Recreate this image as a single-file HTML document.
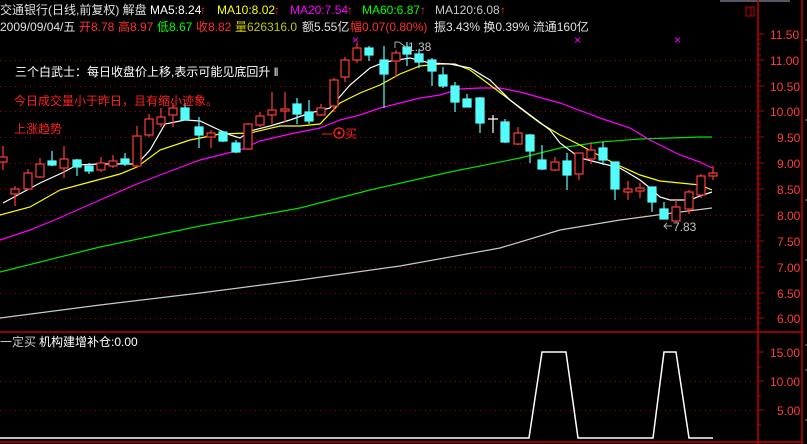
<!DOCTYPE html>
<html><head><meta charset="utf-8"><style>
html,body{margin:0;padding:0;background:#000;}
svg{display:block;}
text{font-family:"Liberation Sans","Noto Sans CJK SC",sans-serif;font-size:12px;}
</style></head><body>
<svg width="807" height="444" viewBox="0 0 807 444" xmlns="http://www.w3.org/2000/svg">
<rect width="807" height="444" fill="#000"/>
<line x1="720" y1="1" x2="790" y2="1" stroke="#556" stroke-width="2"/>
<!-- grid -->
<g stroke="#a00000" stroke-width="1" stroke-dasharray="1,4">
<line x1="0" y1="60.5" x2="757" y2="60.5"/><line x1="0" y1="86.5" x2="757" y2="86.5"/>
<line x1="0" y1="111.5" x2="757" y2="111.5"/><line x1="0" y1="137.5" x2="757" y2="137.5"/>
<line x1="0" y1="163.5" x2="757" y2="163.5"/><line x1="0" y1="189.5" x2="757" y2="189.5"/>
<line x1="0" y1="215.5" x2="757" y2="215.5"/><line x1="0" y1="241.5" x2="757" y2="241.5"/>
<line x1="0" y1="267.5" x2="757" y2="267.5"/><line x1="0" y1="293.5" x2="757" y2="293.5"/>
<line x1="0" y1="318.5" x2="757" y2="318.5"/>
<line x1="0" y1="381.5" x2="757" y2="381.5"/><line x1="0" y1="410.5" x2="757" y2="410.5"/>
</g>
<!-- axes -->
<g stroke="#c00000" stroke-width="1.5" fill="none">
<line x1="758" y1="0" x2="758" y2="444"/>
<line x1="802" y1="0" x2="802" y2="444"/>
<line x1="0" y1="332" x2="802" y2="332"/>
<line x1="0" y1="442" x2="802" y2="442"/>
<rect x="746" y="7" width="8" height="9" stroke-width="1"/>
<line x1="751" y1="7" x2="751" y2="16" stroke-width="1"/>
</g>
<g stroke="#c00000" stroke-width="1">
<path d="M758 34h6M758 60h6M758 86h6M758 111h6M758 137h6M758 163h6M758 189h6M758 215h6M758 241h6M758 267h6M758 293h6M758 318h6M758 352h6M758 381h6M758 410h6"/>
<path d="M758 39h3M758 44h3M758 49h3M758 55h3M758 65h3M758 70h3M758 75h3M758 81h3M758 91h3M758 96h3M758 101h3M758 106h3M758 116h3M758 122h3M758 127h3M758 132h3M758 142h3M758 148h3M758 153h3M758 158h3M758 168h3M758 173h3M758 179h3M758 184h3M758 194h3M758 199h3M758 205h3M758 210h3M758 220h3M758 225h3M758 231h3M758 236h3M758 246h3M758 251h3M758 257h3M758 262h3M758 272h3M758 277h3M758 283h3M758 288h3M758 298h3M758 303h3M758 308h3M758 313h3M758 323h3M758 367h3M758 396h3M758 425h3"/>
</g>
<g fill="#ff3c3c" font-size="13">
<text x="770" y="39">11.50</text><text x="770" y="65">11.00</text><text x="770" y="91">10.50</text>
<text x="770" y="116">10.00</text><text x="777" y="142">9.50</text><text x="777" y="168">9.00</text>
<text x="777" y="194">8.50</text><text x="777" y="220">8.00</text><text x="777" y="246">7.50</text>
<text x="777" y="272">7.00</text><text x="777" y="298">6.50</text><text x="777" y="323">6.00</text>
<text x="770" y="357">15.00</text><text x="770" y="386">10.00</text><text x="777" y="415">5.00</text>
</g>
<!-- MA lines -->
<g fill="none" stroke-width="1.2">
<polyline stroke="#c8c8c8" points="0,318 100,305 200,293 300,280 400,266 500,248 560,230 620,220 680,212 712,208"/>
<polyline stroke="#00e000" points="0,272 100,247 200,226 300,208 370,190 450,172 520,158 560,148 600,142 640,139 700,137 712,137"/>
<polyline stroke="#ff00ff" points="0,240 30,230 57,219 100,200 137,184 160,175 200,160 240,150 260,141 290,134 320,128 340,120 360,115 380,108 400,103 420,98 440,95 460,89 480,88 500,88 520,92 560,103 600,118 630,128 650,140 680,155 700,162 712,168"/>
<polyline stroke="#ffff00" points="0,215 30,207 60,190 90,182 120,174 137,167 160,150 190,140 220,134 250,133 280,126 300,126 320,124 340,103 360,93 380,85 400,74 420,66 440,64 455,64 470,70 490,85 510,100 520,108 540,123 560,135 580,145 600,156 620,166 640,175 660,181 680,183 700,185 712,190"/>
<polyline stroke="#ffffff" points="3,203 40,183 64,172 77,165 100,164 137,164 150,150 165,124 185,120 200,121 215,128 230,135 240,138 250,131 270,126 290,120 310,113 330,108 350,85 370,68 385,62 410,58 430,63 450,64 470,68 490,80 510,100 530,115 550,130 560,143 580,158 600,163 620,168 640,180 650,188 660,197 670,200 690,200 700,196 712,192"/>
</g>
<!-- red candles -->
<g stroke="#ff3c3c" stroke-width="1.2" fill="#000">
<path d="M3 146V170M15 186V206M28 169V190M40 158V178M64 146V178M101 157V172M113 155V168M137 126V168M149 114V137M161 108V127M173 103V127M211 130V148M248 123V150M260 112V127M272 92V124M285 92V122M321 104V116M334 78V112M345 57V82M357 43V63M396 50V77M518 127V145M555 157V171M579 153V180M591 142V164M628 181V200M640 183V198M676 200V222M689 190V214M701 174V198M713 166V180"/>
<rect x="-1" y="157" width="8" height="5"/><rect x="11" y="189" width="8" height="5"/>
<rect x="24" y="173" width="8" height="16"/><rect x="36" y="164" width="8" height="13"/>
<rect x="60" y="159" width="8" height="9"/><rect x="97" y="163" width="8" height="7"/>
<rect x="109" y="161" width="8" height="5"/><rect x="133" y="136" width="8" height="30"/>
<rect x="145" y="119" width="8" height="16"/><rect x="157" y="117" width="8" height="7"/>
<rect x="169" y="108" width="8" height="7"/><rect x="207" y="133" width="8" height="4"/>
<rect x="244" y="124" width="8" height="25"/><rect x="256" y="116" width="8" height="9"/>
<rect x="268" y="110" width="8" height="5"/><rect x="281" y="109" width="8" height="2"/>
<rect x="317" y="108" width="8" height="7"/><rect x="330" y="80" width="8" height="26"/>
<rect x="341" y="60" width="8" height="17"/><rect x="353" y="48" width="8" height="12"/>
<rect x="392" y="53" width="8" height="8"/><rect x="514" y="133" width="8" height="11"/>
<rect x="551" y="162" width="8" height="8"/><rect x="575" y="153" width="8" height="21"/>
<rect x="587" y="150" width="8" height="9"/><rect x="624" y="189" width="8" height="3"/>
<rect x="636" y="188" width="8" height="3"/><rect x="672" y="207" width="8" height="14"/>
<rect x="685" y="192" width="8" height="17"/><rect x="697" y="176" width="8" height="19"/>
<rect x="709" y="173" width="8" height="3"/>
</g>
<!-- cyan candles -->
<g stroke="#54fcfc" stroke-width="1.2" fill="#54fcfc">
<path d="M52 151V166M77 159V176M89 163V174M125 153V166M185 103V120M199 117V148M223 131V142M236 140V153M297 98V124M309 100V124M369 46V61M384 46V108M407 42V66M419 50V68M432 58V86M443 67V88M455 82V112M467 94V107M480 97V133M505 119V143M530 134V163M542 145V170M567 153V190M603 142V165M615 162V200M652 187V212M664 202V219"/>
<rect x="48" y="161" width="8" height="4"/><rect x="73" y="160" width="8" height="7"/>
<rect x="85" y="166" width="8" height="5"/><rect x="121" y="159" width="8" height="5"/>
<rect x="181" y="108" width="8" height="12"/><rect x="195" y="127" width="8" height="8"/>
<rect x="219" y="132" width="8" height="9"/><rect x="232" y="143" width="8" height="9"/>
<rect x="293" y="104" width="8" height="10"/><rect x="305" y="112" width="8" height="9"/>
<rect x="365" y="48" width="8" height="7"/><rect x="380" y="60" width="8" height="14"/>
<rect x="403" y="47" width="8" height="7"/><rect x="415" y="54" width="8" height="8"/>
<rect x="428" y="60" width="8" height="11"/><rect x="439" y="75" width="8" height="11"/>
<rect x="451" y="86" width="8" height="16"/><rect x="463" y="99" width="8" height="8"/>
<rect x="476" y="98" width="8" height="25"/><rect x="501" y="122" width="8" height="20"/>
<rect x="526" y="135" width="8" height="16"/><rect x="538" y="160" width="8" height="9"/>
<rect x="563" y="161" width="8" height="14"/><rect x="599" y="148" width="8" height="12"/>
<rect x="611" y="162" width="8" height="27"/><rect x="648" y="187" width="8" height="15"/>
<rect x="660" y="209" width="8" height="10"/>
</g>
<path d="M493 115V133M488 119H498" stroke="#fff" stroke-width="1.2"/>
<!-- markers -->
<g fill="#ff00ff" font-size="9"><text x="352" y="44">×</text><text x="574" y="44">×</text><text x="674" y="44">×</text></g>
<path d="M395 48V42h4l8 6" stroke="#aaa" fill="none"/>
<text x="408" y="51" fill="#c0c0c0">1.38</text>
<path d="M672 226h-8M667 223l-3 3 3 3" stroke="#aaa" fill="none"/>
<text x="673" y="231" fill="#c0c0c0">7.83</text>
<!-- annotations -->
<text x="15" y="76" fill="#ffffff">三个白武士：每日收盘价上移,表示可能见底回升 ‖</text>
<text x="14" y="105" fill="#ff2020">今日成交量小于昨日，且有缩小迹象。</text>
<text x="14" y="133" fill="#ff2020">上涨趋势</text>
<path d="M322 134h10" stroke="#ff2020"/>
<circle cx="339" cy="133" r="5" stroke="#ff2020" fill="none" stroke-width="1.3"/>
<circle cx="339" cy="133" r="1.6" fill="#ff2020"/>
<text x="345" y="138" fill="#ff2020">买</text>
<!-- header -->
<text x="0" y="14" fill="#e0e0e0">交通银行(日线,前复权) 解盘</text>
<text x="150" y="14" fill="#ffffff">MA5:8.24</text><text x="200" y="14" fill="#ff3030">↑</text>
<text x="217" y="14" fill="#ffff00">MA10:8.02</text><text x="274" y="14" fill="#ff3030">↑</text>
<text x="290" y="14" fill="#ff00ff">MA20:7.54</text><text x="347" y="14" fill="#ff3030">↑</text>
<text x="362" y="14" fill="#00ff00">MA60:6.87</text><text x="420" y="14" fill="#ff3030">↑</text>
<text x="435" y="14" fill="#c8c8c8">MA120:6.08</text><text x="500" y="14" fill="#ff3030">↑</text>
<text x="0" y="31" fill="#e0e0e0">2009/09/04/五</text>
<text x="79" y="31" fill="#ff3030">开8.78</text>
<text x="118" y="31" fill="#ff3030">高8.97</text>
<text x="157" y="31" fill="#00ff00">低8.67</text>
<text x="196" y="31" fill="#ff3030">收8.82</text>
<text x="235" y="31" fill="#c8c800">量626316.0</text>
<text x="302" y="31" fill="#e0e0e0">额5.55亿</text>
<text x="350" y="31" fill="#ff3030">幅0.07(0.80%)</text>
<text x="434" y="31" fill="#e0e0e0">振3.43% 换0.39% 流通160亿</text>
<!-- lower panel -->
<text x="0" y="346" fill="#c8c8c8">一定买</text>
<text x="39" y="346" fill="#ffffff">机构建增补仓:0.00</text>
<polyline fill="none" stroke="#fff" stroke-width="1.5" points="0,438 529,438 542,352 566,352 578,438 653,438 664,352 676,352 689,438 713,438"/>
<g stroke="#888" stroke-width="1"><path d="M805 40h2M805 120h2M805 200h2M805 260h2M805 345h2M805 370h2M805 420h2"/></g>
</svg>
</body></html>
